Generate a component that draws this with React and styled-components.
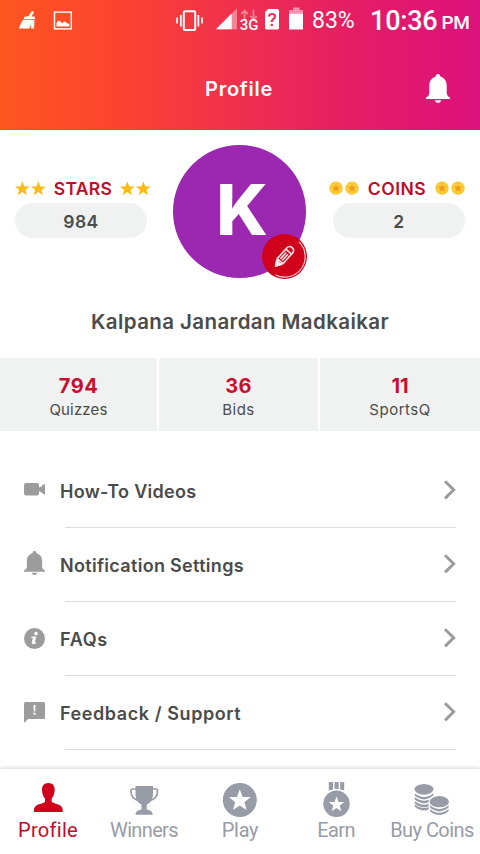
import React from "react";
import styled, { createGlobalStyle } from "styled-components";

const GlobalStyle = createGlobalStyle`
  * { box-sizing: border-box; }
  body { margin: 0; background: #fff; }
  svg { display: block; overflow: visible; flex: none; }
`;

const RED = "#c8102e";
const GREY = "#979ca6";

const Screen = styled.div`
  width: 480px;
  height: 854px;
  overflow: hidden;
  display: flex;
  flex-direction: column;
  background: #fff;
  color: #4a4b4b;
  font-family: Inter, "Noto Sans", sans-serif;
`;

const Header = styled.header`
  height: 130px;
  flex: none;
  color: #fff;
  background: linear-gradient(90deg, #ff5620 0%, #fb4330 25%, #ee304e 50%, #e41c66 75%, #dc127d 100%);
`;

const StatusBar = styled.div`
  height: 40px;
  display: flex;
  align-items: center;
  padding-left: 18px;
  font-family: Roboto, sans-serif;
  white-space: nowrap;
`;

const StatusIcon = styled.div`
  margin-right: ${(p) => p.$gap}px;
`;

const Battery = styled.span`
  width: 58px;
  font-size: 23px;
  line-height: 40px;
  padding-top: 1px;
  letter-spacing: 0;
`;

const Clock = styled.span`
  font-size: 27px;
  font-weight: 500;
  line-height: 40px;
  padding-top: 1px;
  letter-spacing: -0.2px;
`;

const Meridiem = styled.span`
  margin-left: 4px;
  padding-top: 4px;
  font-size: 19px;
  font-weight: 500;
  letter-spacing: -0.4px;
`;

const TitleBar = styled.div`
  height: 90px;
  display: grid;
  grid-template-columns: 1fr auto 1fr;
  align-items: center;
  padding: 0 30px 0 28px;
`;

const Title = styled.h1`
  grid-column: 2;
  margin: 7px 0 0;
  font-size: 20px;
  font-weight: 600;
  line-height: 24px;
  letter-spacing: 0.75px;
`;

const BellButton = styled.div`
  justify-self: end;
  margin-top: 7px;
`;

const Summary = styled.section`
  height: 163px;
  flex: none;
  display: flex;
  justify-content: space-between;
  align-items: flex-start;
  padding: 15px 15px 0;
`;

const Score = styled.div`
  width: 136px;
  padding-top: 31px;
  display: flex;
  flex-direction: column;
  align-items: ${(p) => p.$align};
`;

const ScoreHead = styled.div`
  width: 136px;
  height: 27px;
  padding-bottom: 3px;
  display: flex;
  align-items: center;
  justify-content: space-between;
`;

const ScoreName = styled.span`
  color: #bd0d2b;
  font-size: 17.5px;
  font-weight: 600;
  line-height: 22px;
  margin-top: 2px;
  letter-spacing: ${(p) => p.$spacing}px;
`;

const Pill = styled.div`
  width: 132px;
  height: 35px;
  border-radius: 18px;
  background: #f0f2f2;
  display: flex;
  align-items: center;
  justify-content: center;
  padding-top: 2px;
  font-size: 17.5px;
  font-weight: 600;
  letter-spacing: 0.4px;
`;

const Avatar = styled.div`
  position: relative;
  width: 133px;
  height: 133px;
  margin-right: 1px;
  border-radius: 50%;
  background: #9c27b0;
  color: #fff;
  display: flex;
  align-items: center;
  justify-content: center;
  font-size: 70px;
  font-weight: 800;
  line-height: 1;
  padding-left: 5px;
  padding-bottom: 3px;
`;

const EditBadge = styled.div`
  position: absolute;
  left: 89px;
  top: 89px;
`;

const Name = styled.h2`
  height: 65px;
  margin: 0;
  flex: none;
  text-align: center;
  font-size: 20.5px;
  font-weight: 600;
  line-height: 58px;
  letter-spacing: 0.4px;
`;

const Stats = styled.section`
  height: 73px;
  flex: none;
  display: grid;
  grid-template-columns: 157px 159px 160px;
  gap: 2px;
`;

const Stat = styled.div`
  background: #f0f2f2;
  display: flex;
  flex-direction: column;
  align-items: center;
  padding-top: 16px;
`;

const StatValue = styled.b`
  color: ${RED};
  font-size: 20px;
  font-weight: 650;
  line-height: 24px;
  letter-spacing: ${(p) => p.$spacing}px;
`;

const StatLabel = styled.span`
  font-size: 15px;
  line-height: 24px;
  letter-spacing: ${(p) => p.$spacing}px;
`;

const Menu = styled.nav`
  flex: 1;
  min-height: 0;
  padding: 23px 24px 0;
`;

const MenuItem = styled.div`
  height: 74px;
  display: grid;
  grid-template-columns: 36px 1fr 12px;
  align-items: center;
  background: linear-gradient(#dcdcdc, #dcdcdc) 41px 100% / 391px 1px no-repeat;
`;

const MenuIcon = styled.div`
  padding-bottom: ${(p) => p.$lift}px;
`;

const MenuLabel = styled.span`
  font-size: 18px;
  font-weight: 600;
  line-height: 24px;
  padding-top: 1px;
  letter-spacing: ${(p) => p.$spacing}px;
`;

const TabBar = styled.nav`
  height: 85px;
  flex: none;
  display: grid;
  grid-template-columns: repeat(5, 96px);
  background: #fff;
  box-shadow: 0 -1px 4px rgba(0, 0, 0, 0.18);
`;

const Tab = styled.div`
  display: flex;
  flex-direction: column;
  align-items: center;
  padding-top: 12px;
  color: ${(p) => (p.$active ? "#c20a2c" : GREY)};
  font-family: Roboto, sans-serif;
`;

const TabLabel = styled.span`
  margin-top: -1px;
  font-size: 20px;
  line-height: 24px;
  white-space: nowrap;
  letter-spacing: ${(p) => p.$spacing}px;
`;

const STAR = "M0-7.6 1.9-2.4 7.4-2.3 3.1 1.1 4.6 6.4 0 3.3-4.6 6.4-3.1 1.1-7.4-2.3-1.9-2.4Z";

function Broom() {
  return (
    <svg width="18" height="20" viewBox="18 9.5 18 20" fill="#fff">
      <path d="M32 10.5 34 11.5 31.5 16H34.5L35 18.6H24V16.5L28.5 15.5Z" />
      <path d="M23 19.2H34.5L34 28H31L30.3 23.5 29.5 28H18.8Q20.5 23 23 19.2Z" />
    </svg>
  );
}

function Picture() {
  return (
    <svg width="19" height="19" viewBox="53 9.5 19 19">
      <rect x="54.5" y="10.6" width="16.8" height="16.8" fill="none" stroke="#fff" strokeWidth="1.4" />
      <path d="M56.5 25V21.5Q58.5 17.5 61 20.5L62.3 21.7Q64.5 18.5 66.5 21.5L69.3 22.5V25Z" fill="#fff" />
    </svg>
  );
}

function Vibrate() {
  return (
    <svg width="27" height="21" viewBox="176 9 27 21" fill="none" stroke="#fff" strokeWidth="1.7">
      <rect x="183.8" y="10.2" width="11.4" height="18.8" rx="1" strokeWidth="2" />
      <path d="M180.8 14V25.5M198.4 14V25.5M177.1 16.5V22.5M202 16.5V22.5" />
    </svg>
  );
}

function Signal() {
  return (
    <svg width="22" height="22" viewBox="216 8.7 22 22">
      <path d="M216 29 237 8V29Z" fill="#fff" opacity=".4" />
      <path d="M216 29 231.7 13.3V29Z" fill="#fff" />
    </svg>
  );
}

const Network = styled.div`
  width: 20px;
  margin-right: 6px;
  display: flex;
  flex-direction: column;
  align-items: center;
  font-size: 15px;
  font-weight: 500;
  line-height: 11px;
  padding-top: 1px;
`;

function DataArrows() {
  return (
    <svg width="18" height="10" viewBox="240 8 18 10" fill="none" stroke="#fff" strokeWidth="1.8" opacity=".4">
      <path d="M244.5 18V9M241.2 12 244.5 8.7 247.8 12M253.5 8V17M250.2 14 253.5 17.3 256.8 14" />
    </svg>
  );
}

const SimBody = styled.div`
  width: 14px;
  height: 21px;
  margin: 0 10px 2px 0;
  border-radius: 2px;
  background: #fff;
  clip-path: polygon(25% 0, 100% 0, 100% 100%, 0 100%, 0 18%);
  color: #e0305a;
  font-size: 19px;
  font-weight: 500;
  line-height: 22px;
  text-align: center;
`;

function BatteryIcon() {
  return (
    <svg width="14" height="22" viewBox="289 8.5 14 22" fill="#fff">
      <path opacity=".5" d="M293 7H299.5V9.5H303V13H289V9.5H293Z" />
      <path d="M289 13H303V29H289Z" />
    </svg>
  );
}

function Bell({ width, height, color }) {
  return (
    <svg width={width} height={height} viewBox="0 0 24 29" fill={color} preserveAspectRatio="none">
      <path d="M12 0C13.6 0 14.2 1 14.2 2.6 18 3.6 20.7 7 20.7 11.5V18.5C20.7 21.2 22 22.6 24 23.5V25H0V23.5C2 22.6 3.3 21.2 3.3 18.5V11.5C3.3 7 6 3.6 9.8 2.6 9.8 1 10.4 0 12 0ZM8.7 26.3H15.3C14.5 28.2 13.4 29 12 29S9.5 28.2 8.7 26.3Z" />
    </svg>
  );
}

function StarPair() {
  return (
    <svg width="31" height="15" viewBox="0 0 31 15" fill="#ffb90f">
      <path transform="translate(7.3 7.8)" d={STAR} />
      <path transform="translate(23.3 7.8)" d={STAR} />
    </svg>
  );
}

function CoinPair() {
  return (
    <svg width="30" height="15" viewBox="0 0 30 15">
      {[7, 23].map((x) => (
        <g key={x} transform={`translate(${x} 7.2)`}>
          <circle r="6.6" fill="#ffc428" />
          <circle r="5.3" fill="#ffcf38" />
          <path d={STAR} transform="scale(.6)" fill="#f49a20" />
        </g>
      ))}
    </svg>
  );
}

function EditIcon() {
  return (
    <svg width="45" height="45" viewBox="0 0 45 45">
      <circle cx="22.5" cy="22.5" r="22.5" fill="#d0021b" />
      <path d="M37 7.9A20.5 20.5 0 0 1 13.5 40.9" fill="none" stroke="#fff" strokeOpacity=".85" strokeWidth="1.1" />
      <g transform="translate(21.9 22.9) rotate(42) scale(.95)" fill="none" stroke="#ffe4e6" strokeWidth="1.7" strokeLinejoin="round">
        <path d="M-4-9Q-4-13 0-13T4-9V6L0 13-4 6ZM-4-7.5H4M-1.3-5V4M1.3-5V4M-4 6H4" />
        <path d="M-3 8H3L0 13Z" fill="#fff" />
      </g>
    </svg>
  );
}

function Video() {
  return (
    <svg width="21" height="13" viewBox="0 0 21 13" fill="#9c9c9c">
      <rect width="15" height="12.5" rx="2" />
      <path d="M14.5 4.6Q17 4.4 19.3 1.4 21 .3 21 2V10.5Q21 12.2 19.3 11.1 17 8.1 14.5 7.9Z" />
    </svg>
  );
}

function Info() {
  return (
    <svg width="21" height="21" viewBox="0 0 21 21">
      <circle cx="10.5" cy="10.5" r="10.5" fill="#9c9c9c" />
      <circle cx="12" cy="5.6" r="1.8" fill="#fff" />
      <path d="M7.5 8.5H12.3L10.8 14.5Q11.5 14.8 12.8 13.8 12 16.3 9 16.3 7.3 16.3 7.8 14.2L8.9 10.1H7.2Z" fill="#fff" />
    </svg>
  );
}

function Feedback() {
  return (
    <svg width="21" height="21" viewBox="0 0 21 21">
      <path d="M1.5 0H19.5Q21 0 21 1.5V15.5Q21 17 19.5 17H4L0 21V1.5Q0 0 1.5 0Z" fill="#9c9c9c" />
      <path d="M9.4 3H11.6L11.2 9.6H9.8ZM9.5 10.8H11.5V12.8H9.5Z" fill="#fff" />
    </svg>
  );
}

function Chevron() {
  return (
    <svg width="12" height="22" viewBox="0 0 12 22" fill="none" stroke="#9b9b9b" strokeWidth="2.9">
      <path d="M1 1.2 9.7 9.8 1 18.4" />
    </svg>
  );
}

function Person() {
  return (
    <svg width="36" height="38" viewBox="30 781 36 38" fill="#d0021b">
      <path d="M48.3 783C52.5 783 54.7 785.8 54.7 789.5 54.7 793.5 53.3 796.8 51.7 798.5V801.5C52.8 804.2 62.7 803.6 62.7 809.6V812H34V809.6C34 803.6 44 804.2 45 801.5V798.5C43.3 796.8 42 793.5 42 789.5 42 785.8 44.2 783 48.3 783Z" />
    </svg>
  );
}

function Trophy() {
  return (
    <svg width="36" height="38" viewBox="126 781 36 38">
      <path d="M136 789H132.5Q130.9 789 130.9 790.8 131 799.5 139 800.6M152.5 789H156Q157.5 789 157.5 790.8 157.4 799.5 149.5 800.6" fill="none" stroke={GREY} strokeWidth="1.7" />
      <path d="M135.5 786H153V793C153 799.8 151 802.5 146.8 804.5V809.5C149.5 810 152.7 811 152.7 814.7H135.5C135.5 811 138.7 810 141.5 809.5V804.5C137.4 802.5 135.5 799.8 135.5 793Z" fill={GREY} />
    </svg>
  );
}

function StarBadge() {
  return (
    <svg width="36" height="38" viewBox="222 781 36 38">
      <circle cx="239.8" cy="800" r="17" fill={GREY} />
      <path d={STAR} transform="translate(239.8 800.5) scale(1.48)" fill="#fff" />
    </svg>
  );
}

function Medal() {
  return (
    <svg width="36" height="38" viewBox="318 781 36 38" fill={GREY}>
      <path d="M328.8 782H333V789.5L328.8 790.5ZM334.6 782H338.7V789H334.6ZM340.2 782H344.2V790.5L340.2 789.5Z" />
      <circle cx="336.5" cy="803.8" r="13.2" />
      <path d={STAR} transform="translate(336.5 804.5) scale(1.04)" fill="#fff" />
    </svg>
  );
}

function CoinStacks() {
  const stripe = (x, y) => `M${x} ${y}Q${x + 9.3} ${y + 7.5} ${x + 18.6} ${y}V${y + 2.4}Q${x + 9.3} ${y + 10} ${x} ${y + 2.4}Z`;
  return (
    <svg width="36" height="38" viewBox="414 781 36 38" fill={GREY}>
      <ellipse cx="424" cy="789.3" rx="9.5" ry="5.4" />
      <path d={stripe(414.8, 793.2)} />
      <path d={stripe(414.8, 797.1)} />
      <path d={stripe(414.8, 801)} />
      <path d={stripe(414.8, 804.3)} />
      <path d="M428.6 812V801Q429.5 795 439.3 795T450 801V812Z" fill="#fff" />
      <ellipse cx="439.3" cy="801.7" rx="9.6" ry="5.6" />
      <path d={stripe(430, 805.2)} />
      <path d={stripe(430, 808.9)} />
    </svg>
  );
}

const stats = [
  { value: "794", label: "Quizzes", v: 0.6, l: 0.15 },
  { value: "36", label: "Bids", v: 0.2, l: 0.5 },
  { value: "11", label: "SportsQ", v: 0, l: 0.5 },
];

const menu = [
  { label: "How-To Videos", icon: <Video />, s: 0.28, lift: 3 },
  { label: "Notification Settings", icon: <Bell width={21} height={24} color="#9c9c9c" />, s: 0.31, lift: 4 },
  { label: "FAQs", icon: <Info />, s: 0.7, lift: 1 },
  { label: "Feedback / Support", icon: <Feedback />, s: 0.58, lift: 1 },
];

const tabs = [
  { label: "Profile", icon: <Person />, s: 0.3, active: true },
  { label: "Winners", icon: <Trophy />, s: -0.65 },
  { label: "Play", icon: <StarBadge />, s: -0.3 },
  { label: "Earn", icon: <Medal />, s: -0.6 },
  { label: "Buy Coins", icon: <CoinStacks />, s: -0.55 },
];

export default function App() {
  return (
    <Screen>
      <GlobalStyle />
      <Header>
        <StatusBar>
          <StatusIcon $gap={17}><Broom /></StatusIcon>
          <StatusIcon $gap={104}><Picture /></StatusIcon>
          <StatusIcon $gap={13}><Vibrate /></StatusIcon>
          <StatusIcon $gap={1}><Signal /></StatusIcon>
          <Network><DataArrows />3G</Network>
          <SimBody>?</SimBody>
          <StatusIcon $gap={9}><BatteryIcon /></StatusIcon>
          <Battery>83%</Battery>
          <Clock>10:36</Clock>
          <Meridiem>PM</Meridiem>
        </StatusBar>
        <TitleBar>
          <Title>Profile</Title>
          <BellButton><Bell width={24} height={29} color="#fff" /></BellButton>
        </TitleBar>
      </Header>

      <Summary>
        <Score $align="flex-start">
          <ScoreHead>
            <StarPair />
            <ScoreName $spacing={0.3}>STARS</ScoreName>
            <StarPair />
          </ScoreHead>
          <Pill>984</Pill>
        </Score>
        <Avatar>
          K
          <EditBadge><EditIcon /></EditBadge>
        </Avatar>
        <Score $align="flex-end">
          <ScoreHead>
            <CoinPair />
            <ScoreName $spacing={0.5}>COINS</ScoreName>
            <CoinPair />
          </ScoreHead>
          <Pill>2</Pill>
        </Score>
      </Summary>
      <Name>Kalpana Janardan Madkaikar</Name>

      <Stats>
        {stats.map((s) => (
          <Stat key={s.label}>
            <StatValue $spacing={s.v}>{s.value}</StatValue>
            <StatLabel $spacing={s.l}>{s.label}</StatLabel>
          </Stat>
        ))}
      </Stats>

      <Menu>
        {menu.map((m) => (
          <MenuItem key={m.label}>
            <MenuIcon $lift={m.lift}>{m.icon}</MenuIcon>
            <MenuLabel $spacing={m.s}>{m.label}</MenuLabel>
            <Chevron />
          </MenuItem>
        ))}
      </Menu>

      <TabBar>
        {tabs.map((t) => (
          <Tab key={t.label} $active={t.active}>
            {t.icon}
            <TabLabel $spacing={t.s}>{t.label}</TabLabel>
          </Tab>
        ))}
      </TabBar>
    </Screen>
  );
}
